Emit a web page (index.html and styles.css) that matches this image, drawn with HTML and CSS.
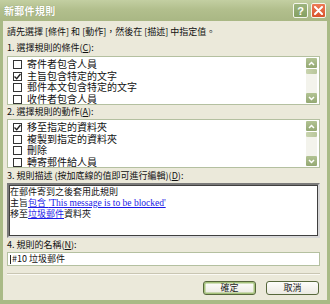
FILE: index.html
```html
<!DOCTYPE html>
<html lang="zh-Hant">
<head>
    <meta charset="UTF-8">
    <title>新郵件規則</title>
    <link rel="stylesheet" href="styles.css">
</head>
<body>
    <div class="window">
        <div class="titlebar">
            <span class="title">新郵件規則</span>
            <div class="title-buttons">
                <span class="tbtn help">?</span>
                <span class="tbtn close">
                    <svg width="9" height="9" viewBox="0 0 9 9"><path d="M1 1 L8 8 M8 1 L1 8" stroke="#fff" stroke-width="2" stroke-linecap="round"/></svg>
                </span>
            </div>
        </div>
        <div class="body">
            <div class="intro">請先選擇 [條件] 和 [動作]，然後在 [描述] 中指定值。</div>

            <div class="label label-1">1. 選擇規則的條件(<u>C</u>):</div>
            <div class="listbox">
                <ul class="items">
                    <li><span class="check"></span>寄件者包含人員</li>
                    <li><span class="check checked"><svg width="7" height="7" viewBox="0 0 7 7"><path d="M0.5 3.5 L2.7 5.7 L6.5 1" fill="none" stroke="#222" stroke-width="1.4"/></svg></span>主旨包含特定的文字</li>
                    <li><span class="check"></span>郵件本文包含特定的文字</li>
                    <li><span class="check"></span>收件者包含人員</li>
                </ul>
                <div class="scrollbar">
                    <span class="sbtn"><svg width="7" height="5" viewBox="0 0 7 5"><path d="M1 4 L3.5 1.5 L6 4" fill="none" stroke="#fff" stroke-width="1.5"/></svg></span>
                    <span class="thumb"></span>
                    <span class="track"></span>
                    <span class="sbtn"><svg width="7" height="5" viewBox="0 0 7 5"><path d="M1 1 L3.5 3.5 L6 1" fill="none" stroke="#fff" stroke-width="1.5"/></svg></span>
                </div>
            </div>

            <div class="label label-2">2. 選擇規則的動作(<u>A</u>):</div>
            <div class="listbox">
                <ul class="items">
                    <li><span class="check checked"><svg width="7" height="7" viewBox="0 0 7 7"><path d="M0.5 3.5 L2.7 5.7 L6.5 1" fill="none" stroke="#222" stroke-width="1.4"/></svg></span>移至指定的資料夾</li>
                    <li><span class="check"></span>複製到指定的資料夾</li>
                    <li><span class="check"></span>刪除</li>
                    <li><span class="check"></span>轉寄郵件給人員</li>
                </ul>
                <div class="scrollbar">
                    <span class="sbtn"><svg width="7" height="5" viewBox="0 0 7 5"><path d="M1 4 L3.5 1.5 L6 4" fill="none" stroke="#fff" stroke-width="1.5"/></svg></span>
                    <span class="thumb"></span>
                    <span class="track"></span>
                    <span class="sbtn"><svg width="7" height="5" viewBox="0 0 7 5"><path d="M1 1 L3.5 3.5 L6 1" fill="none" stroke="#fff" stroke-width="1.5"/></svg></span>
                </div>
            </div>

            <div class="label label-3">3. 規則描述 (按加底線的值即可進行編輯)(<u>D</u>):</div>
            <div class="description">
                <div>在郵件寄到之後套用此規則</div>
                <div>主旨<a class="link">包含 <span class="latin">'This message is to be blocked'</span></a></div>
                <div>移至<a class="link">垃圾郵件</a>資料夾</div>
            </div>

            <div class="label label-4">4. 規則的名稱(<u>N</u>):</div>
            <div class="name-input"><span class="caret"></span>#10 垃圾郵件</div>

            <div class="separator"></div>

            <div class="buttons">
                <button type="button" class="btn default">確定</button>
                <button type="button" class="btn">取消</button>
            </div>
        </div>
    </div>
</body>
</html>
```

FILE: styles.css
```css
body {
    margin: 0;
    font-family: "Noto Sans CJK TC", "Liberation Sans", sans-serif;
    color: #111;
}
.window {
    width: 330px;
    height: 304px;
    display: flex;
    flex-direction: column;
    background-color: #b3c08f;
}
.titlebar {
    height: 21px;
    display: flex;
    align-items: center;
    justify-content: space-between;
    padding: 0 4px 0 4px;
    background: linear-gradient(#c3cfa2, #b2bf8d 45%, #a9b784);
}
.title {
    color: #fff;
    font-size: 10px;
    font-weight: bold;
    text-shadow: 0 0 1px #7d8a5c;
    letter-spacing: 0.3px;
}
.title-buttons {
    display: flex;
    gap: 3px;
}
.tbtn {
    width: 13px;
    height: 13px;
    border: 1px solid #f4f6ec;
    border-radius: 2px;
    display: flex;
    align-items: center;
    justify-content: center;
    color: #fff;
    font-family: "Liberation Sans", sans-serif;
    font-weight: bold;
    font-size: 11px;
}
.help {
    background: linear-gradient(#9db47e, #84a062);
}
.close {
    background: linear-gradient(#ec7b56, #d9522c);
}
.body {
    flex: 1;
    display: flex;
    flex-direction: column;
    background-color: #ebe9da;
    border: solid #a9ba86;
    border-width: 0 3px 4px 3px;
    padding: 5px 7px 0 4px;
    font-size: 9px;
}
.intro, .label {
    line-height: 12px;
    white-space: nowrap;
}
.label-1 {
    margin-top: 4px;
    margin-bottom: 2px;
}
.label-2 {
    margin-top: 1px;
    margin-bottom: 1px;
}
.label-3 {
    margin-top: 2px;
    margin-bottom: 1px;
}
.label-4 {
    margin-top: 1px;
    margin-bottom: 1px;
}
.listbox {
    height: 49px;
    box-sizing: border-box;
    border: 1px solid #b4c0a0;
    background-color: #fff;
    display: flex;
    overflow: hidden;
}
.items {
    flex: 1;
    list-style: none;
    margin: 0;
    padding: 2px 0 0 5px;
    font-family: "Liberation Sans", "Noto Sans CJK TC", sans-serif;
    font-size: 10px;
}
.items li {
    height: 11.5px;
    line-height: 11.5px;
    display: flex;
    align-items: center;
    white-space: nowrap;
}
.check {
    width: 7px;
    height: 7px;
    border: 1px solid #333;
    background-color: #fff;
    margin-right: 5px;
    display: flex;
    align-items: center;
    justify-content: center;
}
.scrollbar {
    width: 11px;
    margin: 1px 2px 1px 0;
    display: flex;
    flex-direction: column;
}
.sbtn {
    height: 10px;
    border-radius: 1px;
    background: linear-gradient(#b2c393, #94a873);
    display: flex;
    align-items: center;
    justify-content: center;
}
.thumb {
    height: 5px;
    margin-top: 1px;
    background: linear-gradient(90deg, #c9d4af, #b8c69a);
    border-radius: 1px;
}
.track {
    flex: 1;
    background-color: #f3f3ec;
}
.description {
    height: 55px;
    box-sizing: border-box;
    border: 2px solid #5f5f5f;
    border-color: #7a7a7a #d8d8d8 #d8d8d8 #7a7a7a;
    box-shadow: inset 1px 1px 0 #404040, inset -1px -1px 0 #404040;
    background-color: #fff;
    padding: 2px 2px 0 1px;
    font-family: "Liberation Sans", "Noto Sans CJK TC", sans-serif;
    line-height: 11px;
}
.description div {
    white-space: nowrap;
}
.link {
    color: #1a1ae6;
    text-decoration: underline;
}
.latin {
    font-family: "Liberation Serif", serif;
    font-size: 9.5px;
}
.name-input {
    height: 14px;
    box-sizing: border-box;
    border: 1px solid #b4c0a0;
    background-color: #fff;
    padding-left: 2px;
    line-height: 12px;
    display: flex;
    align-items: center;
}
.caret {
    width: 1px;
    height: 9px;
    background-color: #222;
    margin-right: 1px;
}
.separator {
    margin-top: 7px;
    height: 1px;
    background-color: #c9c6b3;
    border-bottom: 1px solid #fbfaf4;
}
.buttons {
    display: flex;
    justify-content: flex-end;
    gap: 10px;
    margin-top: 6px;
    padding-right: 1px;
}
.btn {
    width: 53px;
    height: 14px;
    padding: 0;
    border: 1px solid #56673b;
    border-radius: 3px;
    background: linear-gradient(#fdfdfb, #ebeae2);
    font-family: "Noto Sans CJK TC", sans-serif;
    font-size: 9px;
    line-height: 12px;
    color: #222;
}
.btn.default {
    box-shadow: inset 0 0 0 1.5px #a5c27b;
}
```
